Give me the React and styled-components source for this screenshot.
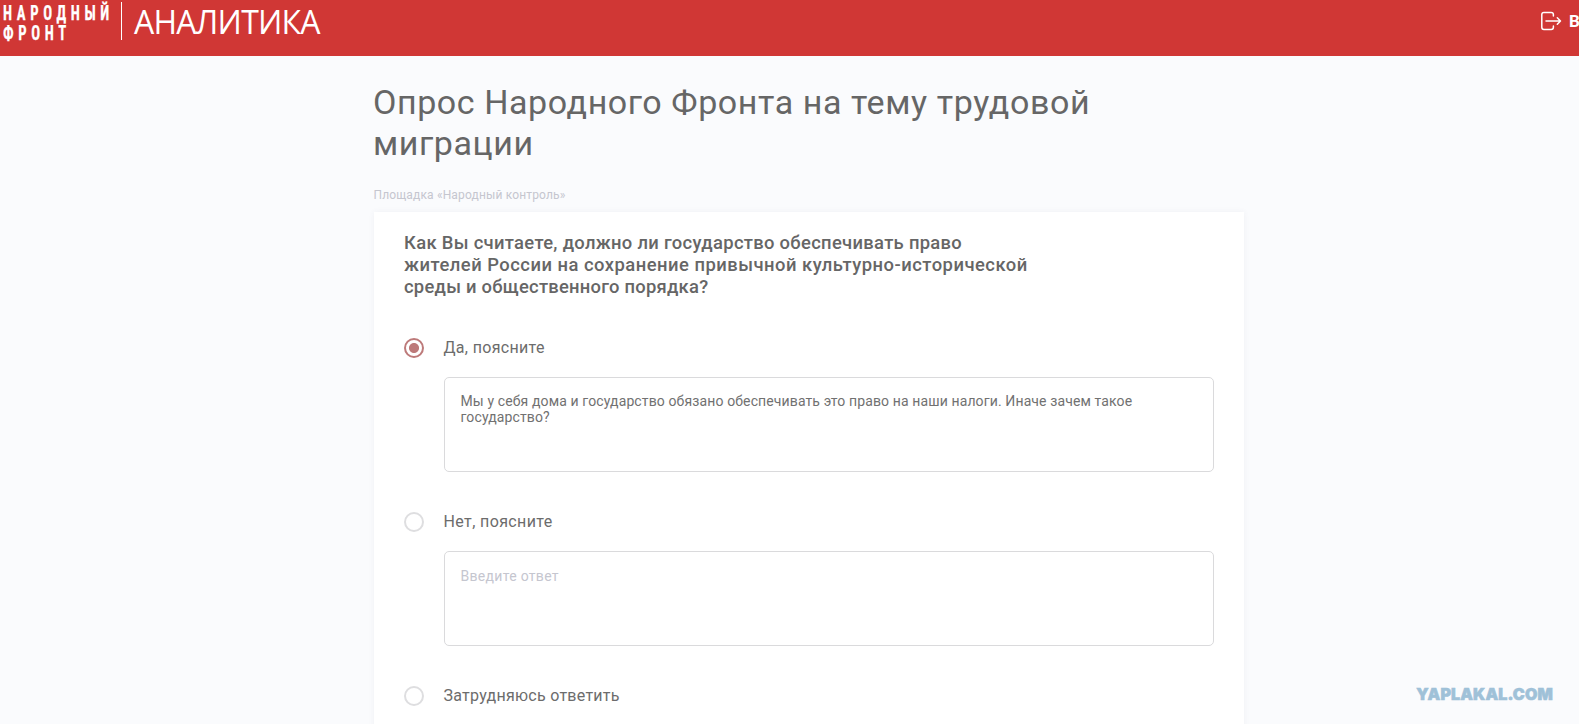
import React, { useState } from "react";
import styled, { createGlobalStyle } from "styled-components";

const GlobalStyle = createGlobalStyle`
  * { box-sizing: border-box; }
  body {
    margin: 0;
    background: #fafbfd;
    color: #666;
    font-family: Roboto, "Noto Sans", sans-serif;
    overflow: hidden;
  }
`;

const Page = styled.div`
  height: 724px;
  overflow: hidden;
`;

const Header = styled.header`
  display: flex;
  align-items: flex-start;
  justify-content: space-between;
  height: 56px;
  overflow: hidden;
  background: #d03735;
  color: #fff;
`;

const Brand = styled.div`
  display: flex;
  align-items: flex-start;
  padding: 2px 0 0 3px;
`;

const Logo = styled.div`
  display: flex;
  flex-direction: column;
  width: 118px;
  padding-top: 1px;
`;

const LogoLine = styled.span`
  font: 700 20.5px/20px "Roboto Condensed", Roboto, sans-serif;
  letter-spacing: 6.4px;
  white-space: nowrap;
  transform: scaleX(0.72);
  transform-origin: left;
  -webkit-text-stroke: 0.25px #fff;
`;

const Section = styled.div`
  height: 38px;
  padding-left: 12px;
  border-left: 1px solid #fff;
  font-family: "Open Sans", sans-serif;
  font-size: 32px;
  font-weight: 400;
  line-height: 40px;
  letter-spacing: -0.75px;
`;

const Logout = styled.a`
  display: flex;
  flex: none;
  align-items: center;
  gap: 7px;
  width: 38px;
  height: 42px;
  white-space: nowrap;
  font-size: 17px;
  font-weight: 700;

  svg { flex: none; }
`;

const Main = styled.main`
  width: 870px;
  margin-left: 374px;
  padding-top: 26px;
`;

const Title = styled.h1`
  margin: 0 0 0 -1px;
  font-size: 34px;
  font-weight: 400;
  line-height: 41px;
  letter-spacing: 0.58px;
`;

const Platform = styled.p`
  margin: 24px 0 10px -0.5px;
  color: #c5c6cf;
  font-size: 12px;
  line-height: 14px;
  height: 14px;
  letter-spacing: 0.15px;
`;

const Card = styled.section`
  height: 540px;
  padding: 20px 30px;
  background: #fff;
  box-shadow: 0 0 6px rgba(60, 70, 110, 0.06);
`;

const Question = styled.h2`
  margin: 0 0 40px;
  font-size: 18.4px;
  font-weight: 500;
  line-height: 22px;
`;

const QuestionLine = styled.span`
  display: block;
  white-space: nowrap;
  letter-spacing: ${(p) => p.$spacing}px;
`;

const Option = styled.div`
  height: 174px;
`;

const OptionLabel = styled.label`
  display: flex;
  align-items: center;
  gap: 19.5px;
  height: 20px;
  margin-bottom: 19px;
  color: #6c6c6c;
  font-size: 16px;
  line-height: 20px;
  letter-spacing: ${(p) => p.$spacing}px;
`;

const Radio = styled.input`
  appearance: none;
  flex: none;
  width: 20px;
  height: 20px;
  margin: 0;
  border: 2px solid ${(p) => (p.checked ? "#bd7a7a" : "#dedee0")};
  border-radius: 50%;
  background: ${(p) => (p.checked ? "radial-gradient(circle, #bd7a7a 4.6px, #fff 5.4px)" : "#fff")};
`;

const Answer = styled.textarea`
  display: block;
  width: 770px;
  height: 95px;
  margin-left: 40px;
  padding: ${(p) => (p.value ? "15px" : "16px")} 60px 10px 15.5px;
  border: 1px solid #dadadc;
  border-radius: 5px;
  outline: none;
  resize: none;
  overflow: hidden;
  background: #fff;
  color: #717171;
  font: 400 14px/16px Roboto, sans-serif;
  letter-spacing: 0.12px;

  &::placeholder {
    color: #c5c6cf;
    font-weight: 400;
    letter-spacing: 0.3px;
    opacity: 1;
  }
`;

const Watermark = styled.div`
  position: absolute;
  right: 26px;
  bottom: 20px;
  color: #9fc1d8;
  font: 900 16px/20px Inter, sans-serif;
  letter-spacing: 0.15px;
  -webkit-text-stroke: 0.6px #9fc1d8;
`;

const LogoutIcon = () => (
  <svg width="21" height="20" viewBox="0 0 21 20" fill="none" stroke="#fff" strokeWidth="1.5" strokeLinecap="round" strokeLinejoin="round">
    <path d="M12.4 5V3.6Q12.4 1.4 10.2 1.4H2.9Q.8 1.4 .8 3.6V16.3Q.8 18.5 2.9 18.5H10.2Q12.4 18.5 12.4 16.3V14.9" />
    <path d="M5 10H19.4M16.3 6.8L19.5 10L16.3 13.2" />
  </svg>
);

const QUESTION = [
  { text: "Как Вы считаете, должно ли государство обеспечивать право", spacing: 0.31 },
  { text: "жителей России на сохранение привычной культурно-исторической", spacing: 0.49 },
  { text: "среды и общественного порядка?", spacing: 0.25 },
];

const OPTIONS = [
  { id: "yes", label: "Да, поясните", spacing: 0.32, hasAnswer: true },
  { id: "no", label: "Нет, поясните", spacing: 0.38, hasAnswer: true },
  { id: "unsure", label: "Затрудняюсь ответить", spacing: 0.26 },
];

export default function App() {
  const [selected, setSelected] = useState("yes");
  const [answers, setAnswers] = useState({
    yes: "Мы у себя дома и государство обязано обеспечивать это право на наши налоги. Иначе зачем такое государство?",
    no: "",
  });

  return (
    <Page>
      <GlobalStyle />
      <Header>
        <Brand>
          <Logo>
            <LogoLine>НАРОДНЫЙ</LogoLine>
            <LogoLine>ФРОНТ</LogoLine>
          </Logo>
          <Section>АНАЛИТИКА</Section>
        </Brand>
        <Logout>
          <LogoutIcon />
          Выход
        </Logout>
      </Header>
      <Main>
        <Title>Опрос Народного Фронта на тему трудовой миграции</Title>
        <Platform>Площадка «Народный контроль»</Platform>
        <Card>
          <Question>
            {QUESTION.map((line) => (
              <QuestionLine key={line.text} $spacing={line.spacing}>{line.text}</QuestionLine>
            ))}
          </Question>
          {OPTIONS.map((option) => (
            <Option key={option.id}>
              <OptionLabel $spacing={option.spacing}>
                <Radio
                  type="radio"
                  name="answer"
                  checked={selected === option.id}
                  onChange={() => setSelected(option.id)}
                />
                {option.label}
              </OptionLabel>
              {option.hasAnswer && (
                <Answer
                  value={answers[option.id]}
                  placeholder="Введите ответ"
                  spellCheck={false}
                  onChange={(e) => setAnswers({ ...answers, [option.id]: e.target.value })}
                />
              )}
            </Option>
          ))}
        </Card>
      </Main>
      <Watermark>YAPLAKAL.COM</Watermark>
    </Page>
  );
}
